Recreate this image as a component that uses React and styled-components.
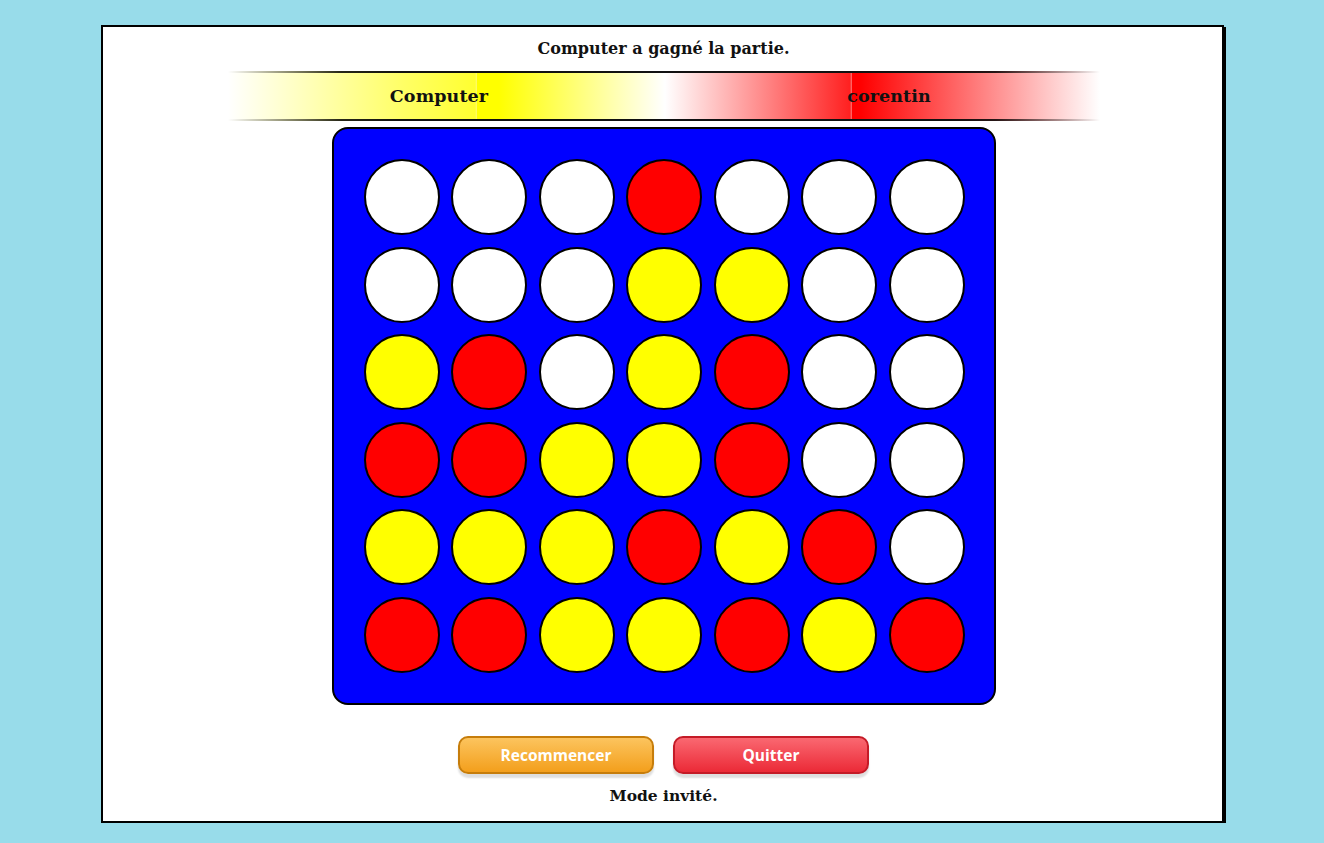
import React from "react";
import styled, { createGlobalStyle } from "styled-components";

const GlobalStyle = createGlobalStyle`
  html, body {
    margin: 0;
    padding: 0;
    background: #98dcea;
  }
  body {
    font-family: "DejaVu Serif", "Liberation Serif", serif;
  }
`;

const Frame = styled.div`
  box-sizing: border-box;
  width: 1123px;
  height: 798px;
  margin: 25px auto 0;
  padding: 12px 0 0 3px;
  background: #fff;
  border: 2px solid #000;
  box-shadow: 2px 2px 0 #000;
  display: flex;
  flex-direction: column;
  align-items: center;
`;

const Status = styled.div`
  font-family: "DejaVu Serif", serif;
  font-weight: bold;
  font-size: 16px;
  line-height: 20px;
  color: #111;
`;

const Players = styled.div`
  position: relative;
  margin-top: 12px;
  width: 872px;
  height: 50px;
  display: grid;
  grid-template-columns: 437px 435px;

  &::before,
  &::after {
    content: "";
    position: absolute;
    left: 0;
    right: 0;
    height: 2px;
    background: linear-gradient(
      to right,
      rgba(0, 0, 0, 0) 0%,
      rgba(0, 0, 0, 0.85) 13%,
      #111 20%,
      #111 82%,
      rgba(0, 0, 0, 0.85) 88%,
      rgba(0, 0, 0, 0) 100%
    );
  }
  &::before {
    top: 0;
  }
  &::after {
    bottom: 0;
  }
`;

const PlayerSide = styled.div`
  display: flex;
  align-items: center;
  justify-content: center;
  padding: ${(p) => (p.$side === "left" ? "0 14px 0 0" : "0 0 0 14px")};
  background: ${(p) =>
    p.$side === "left"
      ? "linear-gradient(to right, #fff 0%, #ffff66 40%, #ffff30 56.6%, #fffa90 56.8%, #ffff00 57%, #ffff00 62%, #fff 100%)"
      : "linear-gradient(to right, #fff 0%, #ff2020 42.6%, #ff9a9a 42.8%, #ff0000 43%, #ff0000 45%, #fff 100%)"};
  font-family: "DejaVu Serif", serif;
  font-weight: bold;
  font-size: 17.5px;
  color: #111;
  letter-spacing: 0.1px;
`;

const Board = styled.div`
  margin-top: 6px;
  box-sizing: border-box;
  width: 664px;
  padding: 30px;
  background: #0000ff;
  border: 2px solid #000;
  border-radius: 16px;
  display: grid;
  grid-template-columns: repeat(7, 76px);
  grid-auto-rows: 76px;
  gap: 11.5px;
`;

const colors = {
  W: "#ffffff",
  R: "#ff0000",
  Y: "#ffff00",
};

const Cell = styled.div`
  box-sizing: border-box;
  width: 76px;
  height: 76px;
  border-radius: 50%;
  border: 2px solid #000;
  background: ${(p) => colors[p.$color]};
`;

const Actions = styled.div`
  margin-top: 31px;
  display: flex;
  gap: 19px;
`;

const Button = styled.button`
  box-sizing: border-box;
  width: 196px;
  height: 38px;
  border-radius: 10px;
  border: 2px solid ${(p) => (p.$variant === "danger" ? "#c41b27" : "#c67d0b")};
  background: ${(p) =>
    p.$variant === "danger"
      ? "linear-gradient(to bottom, #fa6871, #eb2a37)"
      : "linear-gradient(to bottom, #fcc45e, #f39f1c)"};
  box-shadow: 0 4px 2px rgba(0, 0, 0, 0.13);
  color: #fff;
  font-family: "Open Sans", "Lato", sans-serif;
  font-weight: 700;
  font-size: 15.5px;
  cursor: pointer;
  padding: 0;
`;

const Footer = styled.div`
  margin-top: 10px;
  font-family: "DejaVu Serif", serif;
  font-weight: bold;
  font-size: 15.5px;
  line-height: 24px;
  color: #111;
`;

const grid = [
  "WWWRWWW",
  "WWWYYWW",
  "YRWYRWW",
  "RRYYRWW",
  "YYYRYRW",
  "RRYYRYR",
];

export default function App() {
  return (
    <>
      <GlobalStyle />
      <Frame>
        <Status>Computer a gagné la partie.</Status>
        <Players>
          <PlayerSide $side="left">Computer</PlayerSide>
          <PlayerSide $side="right">corentin</PlayerSide>
        </Players>
        <Board>
          {grid.map((row, r) =>
            row.split("").map((c, i) => <Cell key={`${r}-${i}`} $color={c} />)
          )}
        </Board>
        <Actions>
          <Button>Recommencer</Button>
          <Button $variant="danger">Quitter</Button>
        </Actions>
        <Footer>Mode invité.</Footer>
      </Frame>
    </>
  );
}
